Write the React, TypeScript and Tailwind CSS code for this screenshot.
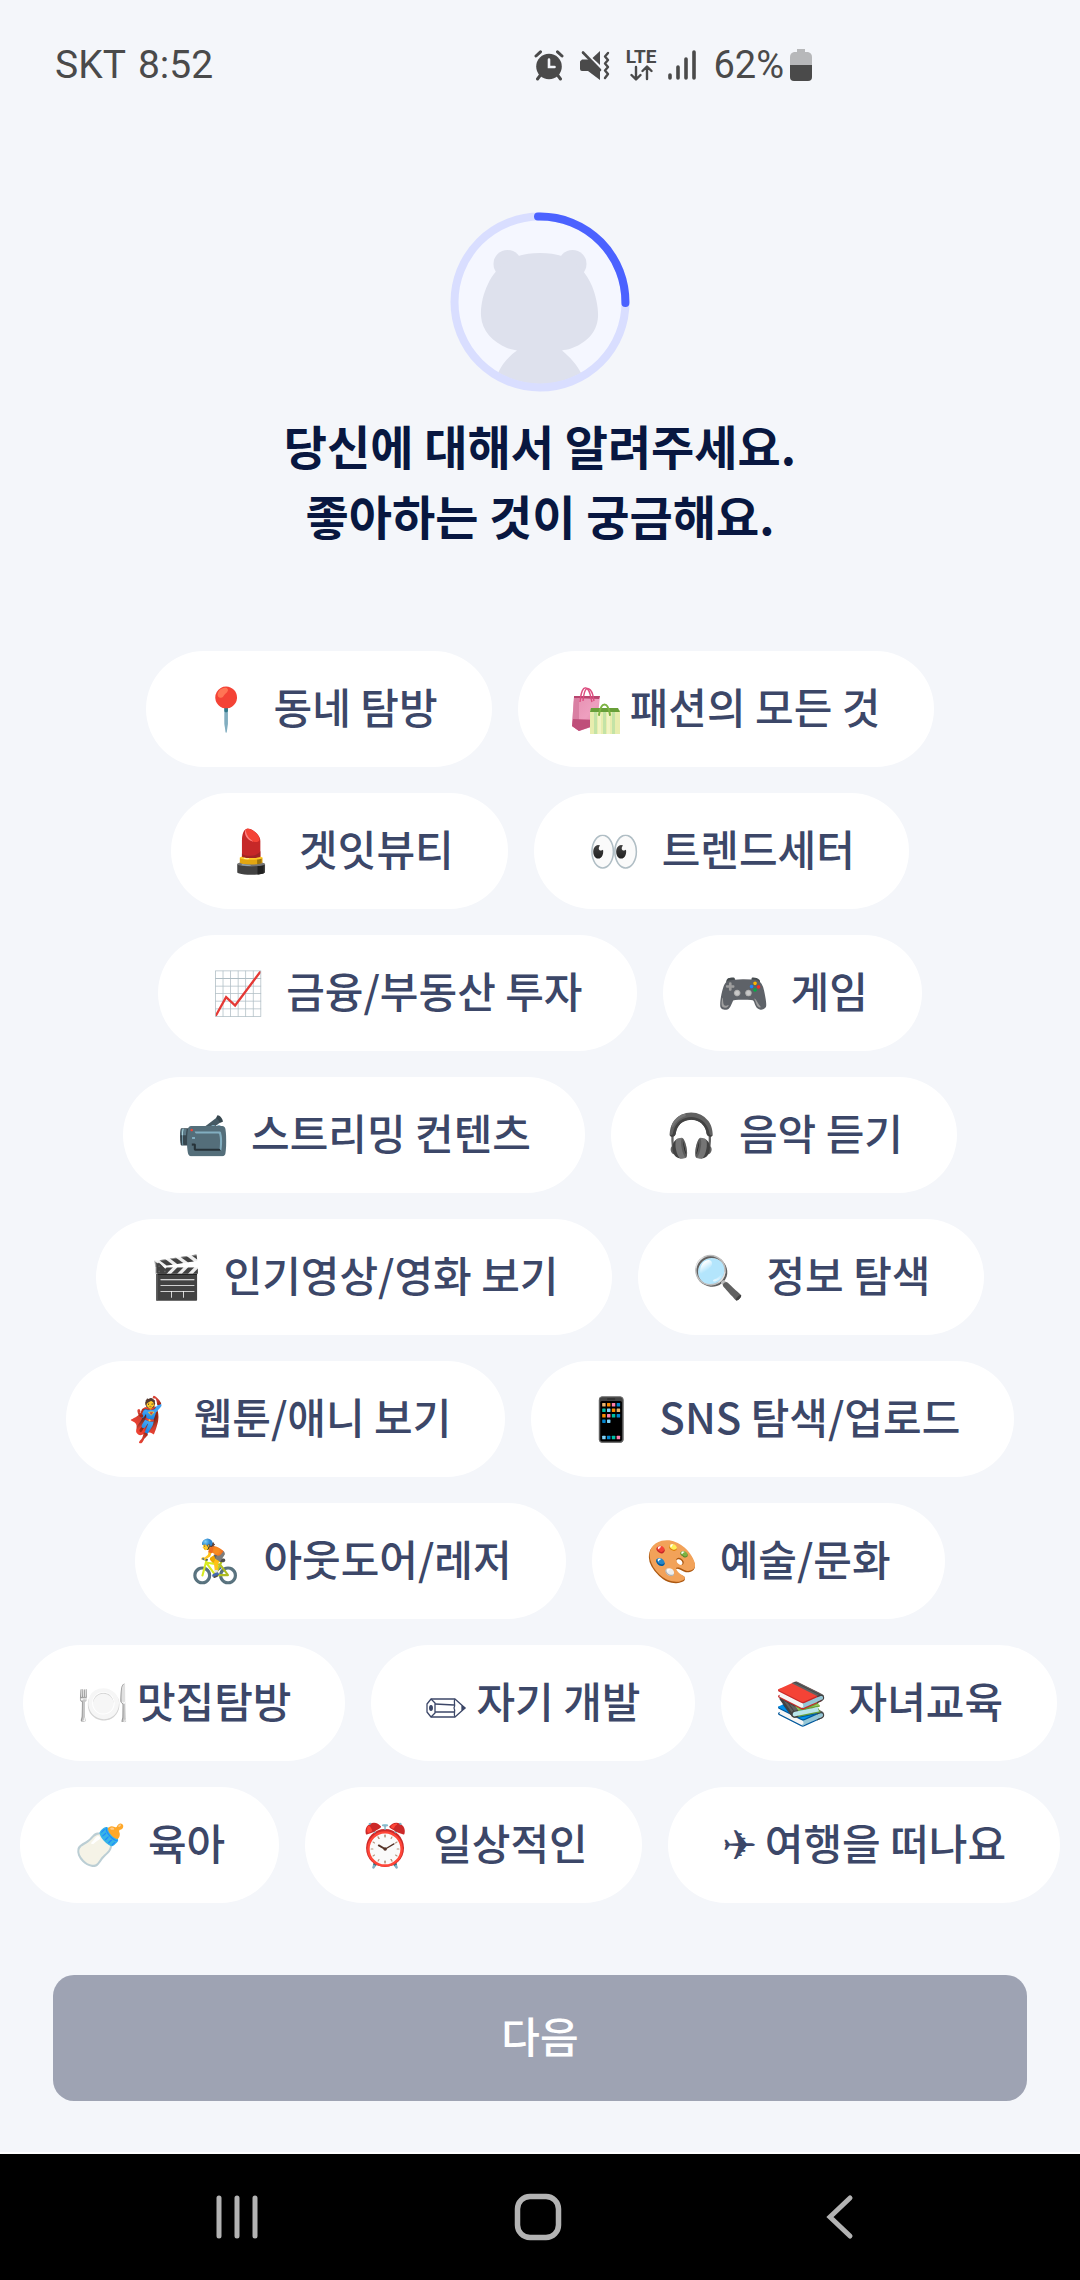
import React, { useState } from 'react'

const ShoppingBags = () => (
  <svg width="50" height="60" viewBox="0 0 50 60" fill="none" aria-hidden="true">
    <defs>
      <linearGradient id="pinkBag" x1="0" y1="0" x2="1" y2="1">
        <stop offset="0" stopColor="#e58fb0" />
        <stop offset="0.55" stopColor="#ee9fbf" />
        <stop offset="1" stopColor="#d9789c" />
      </linearGradient>
    </defs>
    <path d="M2 22 L28 21 L25 50 L7 56 L0 51 Z" fill="url(#pinkBag)" />
    <path d="M2 22 L7 24 L7 56 L0 51 Z" fill="#d980a3" />
    <path d="M1 44 L26 45 L24 50 L7 56 L0 51 Z" fill="#bf4f7a" />
    <path d="M2 21 L28 21 L27 24 L2 23 Z" fill="#b8456f" />
    <path d="M8 27 C9 17 11 12 14 13 C18 14 18 20 20 27" stroke="#dc4c7f" strokeWidth="1.4" />
    <path d="M11 26 C12 16 14 12 17 14 C21 16 21 21 22 26" stroke="#dc4c7f" strokeWidth="1.4" />
    <path d="M18 35 H48 V59 H18 Z" fill="#e8edae" />
    <path d="M22 36 H25 V59 H22 Z M31 36 H34 V59 H31 Z M40 36 H43 V59 H40 Z" fill="#c3e3a6" />
    <path d="M26 36 H29 V59 H26 Z M35 36 H38 V59 H35 Z" fill="#f2f4c4" />
    <path d="M19 33 H46 L48 37 H18 Z" fill="#689f38" />
    <path d="M27 40 C29 26 36 26 38 40" stroke="#7cb342" strokeWidth="2" strokeLinecap="round" />
  </svg>
)

const Pencil = () => (
  <svg width="43" height="38" viewBox="0 0 43 38" fill="none" stroke="currentColor" strokeWidth="1.3" strokeLinejoin="round" aria-hidden="true">
    <path d="M6 19 L30 19 L40 28 L30 37 L6 37 L2 32 L2 24 Z" />
    <path d="M6 19 L10 23 L10 33 L6 37" />
    <path d="M10 24 L29 25 M10 32 L29 32 M30 19 C28 22 31 24 29 28 C31 31 28 34 30 37" />
    <ellipse cx="6" cy="28" rx="1.3" ry="2.4" fill="currentColor" />
    <path d="M37 26 L40 28 L37 30 Z" fill="currentColor" />
  </svg>
)

const interests = [
  { icon: '📍', label: '동네 탐방' },
  { icon: <ShoppingBags />, label: '패션의 모든 것', tight: true },
  { icon: '💄', label: '겟잇뷰티' },
  { icon: '👀', label: '트렌드세터' },
  { icon: '📈', label: '금융/부동산 투자' },
  { icon: '🎮', label: '게임' },
  { icon: '📹', label: '스트리밍 컨텐츠' },
  { icon: '🎧', label: '음악 듣기' },
  { icon: '🎬', label: '인기영상/영화 보기' },
  { icon: '🔍', label: '정보 탐색' },
  { icon: '🦸', label: '웹툰/애니 보기' },
  { icon: '📱', label: 'SNS 탐색/업로드' },
  { icon: '🚴', label: '아웃도어/레저' },
  { icon: '🎨', label: '예술/문화' },
  { icon: '🍽️', label: '맛집탐방', tight: true },
  { icon: <Pencil />, label: '자기 개발', tight: true },
  { icon: '📚', label: '자녀교육' },
  { icon: '🍼', label: '육아' },
  { icon: '⏰', label: '일상적인' },
  { icon: '✈', label: '여행을 떠나요', tight: true },
]

const StatusBar = () => (
  <div className="flex h-[130px] items-center justify-between pl-[55px] pr-[268px] font-[Roboto,sans-serif] text-[#4a4a4a]">
    <div className="flex gap-3 text-[39px] leading-none">
      <span>SKT</span>
      <span>8:52</span>
    </div>
    <div className="flex items-center">
      {/* Alarm */}
      <svg className="mr-4" width="30" height="32" viewBox="0 0 30 32" fill="none" stroke="currentColor" strokeLinecap="round" aria-hidden="true">
        <circle cx="15" cy="17.5" r="12.8" fill="currentColor" stroke="none" />
        <path d="M2 7 L6.5 2.8 M28 7 L23.5 2.8 M3.5 30 L6.5 26 M26.5 30 L23.5 26" strokeWidth="3" />
        <path d="M15 10.5 V18 H20.5" stroke="#f4f6fa" strokeWidth="2.6" />
      </svg>
      {/* Vibrate / muted */}
      <svg className="mr-4" width="30" height="32" viewBox="0 0 30 32" fill="none" stroke="currentColor" strokeLinecap="round" aria-hidden="true">
        <path d="M1 11.5 Q0 11.5 0 13 V20 Q0 22 2 22 H8 L20 31 V21 L9 10.5 H2 Z" fill="currentColor" stroke="none" />
        <path d="M12.5 9 L20 2 V16 Z" fill="currentColor" stroke="none" />
        <path d="M3 3.5 L20 21" strokeWidth="2.6" />
        <path d="M28 4 L25 7.5 L28 11 L25 14.5 L28 18 L25 21.5 L28 25 L25 29" strokeWidth="2.4" strokeLinejoin="round" />
      </svg>
      <div className="mr-3 flex flex-col items-center">
        <span className="text-[19px] leading-4 font-bold">LTE</span>
        <svg width="24" height="16" viewBox="0 0 24 16" fill="none" stroke="currentColor" strokeWidth="2.4" strokeLinecap="round" strokeLinejoin="round" aria-hidden="true">
          <path d="M7 2 V14 M2.5 10 L7 14.5 L11.5 10 M18 14 V2 M13.5 6 L18 1.5 L22.5 6" />
        </svg>
      </div>
      {/* Signal */}
      <svg className="mr-4" width="29" height="32" viewBox="0 0 29 32" stroke="currentColor" strokeWidth="3.6" strokeLinecap="round" aria-hidden="true">
        <path d="M2 26 V29 M10 18 V29 M18 10 V29 M26 3 V29" />
      </svg>
      <span className="mr-1.5 text-[38px] leading-none">62%</span>
      {/* Battery */}
      <svg width="22" height="34" viewBox="0 0 22 34" aria-hidden="true">
        <path d="M7 1 H15 V4 H18 Q22 5 22 9 V17 H0 V9 Q0 5 4 4 H7 Z" fill="#b7b8ba" />
        <path d="M0 17 H22 V29 Q22 33 18 33 H4 Q0 33 0 29 Z" fill="currentColor" />
      </svg>
    </div>
  </div>
)

const Avatar = () => (
  <svg className="mx-auto" width="180" height="180" viewBox="0 0 180 180" fill="none" role="img" aria-label="프로필">
    <defs>
      <clipPath id="face">
        <circle cx="90" cy="90" r="82" />
      </clipPath>
    </defs>
    <circle cx="90" cy="90" r="85" fill="#f5f7ff" />
    <g clipPath="url(#face)" fill="#dee1ed">
      <circle cx="57.5" cy="52" r="14" />
      <circle cx="122.5" cy="52" r="14" />
      <path d="M90 41 C100 41 108 42.5 114 45 C127 50 137 62 142 74 C146 84 148.5 96 148 105 C147 122 134 132 121 136.5 C118 137.5 114 138 112 138.5 C120 145 127 153 131 161 V180 H48 V161 C52 152 59 144 67 138.5 C64 138 60 137 57 136 C43 130 32 119 31 104 C30.5 94 33 82 38 72 C43 61 53 50 66 45 C72 42.5 80 41 90 41 Z" />
    </g>
    <circle cx="90" cy="90" r="85.5" stroke="#d9deff" strokeWidth="8" />
    <path d="M88 4.5 H90 A85.5 85.5 0 0 1 175.4 91" stroke="#4b62ff" strokeWidth="8" strokeLinecap="round" />
  </svg>
)

const NavBar = () => (
  <nav className="grid h-[126px] grid-cols-3 bg-black pl-[86px] pr-[89px] text-[#b3b3b3]">
    <button aria-label="최근 앱" className="flex items-center justify-center">
      <svg width="44" height="46" viewBox="0 0 44 46" stroke="currentColor" strokeWidth="5" strokeLinecap="round">
        <path d="M4 4 V42 M22 4 V42 M40 4 V42" />
      </svg>
    </button>
    <button aria-label="홈" className="flex items-center justify-center">
      <svg width="48" height="48" viewBox="0 0 48 48" fill="none" stroke="currentColor" strokeWidth="5.5">
        <rect x="3.5" y="3.5" width="41" height="41" rx="12.5" />
      </svg>
    </button>
    <button aria-label="뒤로" className="flex items-center justify-center">
      <svg width="28" height="46" viewBox="0 0 28 46" fill="none" stroke="currentColor" strokeWidth="5" strokeLinecap="round">
        <path d="M24 4 L4 23 L24 42" />
      </svg>
    </button>
  </nav>
)

const App = () => {
  const [picked, setPicked] = useState<string[]>([])

  const toggle = (label: string) =>
    setPicked(picked.includes(label) ? picked.filter((p) => p !== label) : [...picked, label])

  return (
    <div className="bg-[#f4f6fa] font-['Noto_Sans_CJK_KR',sans-serif]">
      <StatusBar />
      <main className="border-b-2 border-white pt-[82px] pb-[51px]">
        <Avatar />
        <h1 className="mt-[18px] text-center text-[47px] leading-[70px] font-bold text-[#081740]">
          당신에 대해서 알려주세요. <br /> 좋아하는 것이 궁금해요.
        </h1>

        <div className="mt-[101px] flex flex-wrap justify-center gap-[26px] px-4">
          {interests.map((item) => (
            <button
              key={item.label}
              aria-pressed={picked.includes(item.label)}
              onClick={() => toggle(item.label)}
              className={`flex h-[116px] items-center rounded-full bg-white px-[54px] pb-2 text-[42px] font-medium text-[#3c4768] ${item.tight ? 'gap-2' : 'gap-[22px]'}`}
            >
              <span>{item.icon}</span>
              {item.label}
            </button>
          ))}
        </div>

        <div className="mt-[72px] px-[53px]">
          <button className="h-[126px] w-full rounded-[21px] bg-[#9ea3b3] pb-2 text-[42px] font-medium text-white">
            다음
          </button>
        </div>
      </main>
      <NavBar />
    </div>
  )
}

export default App
